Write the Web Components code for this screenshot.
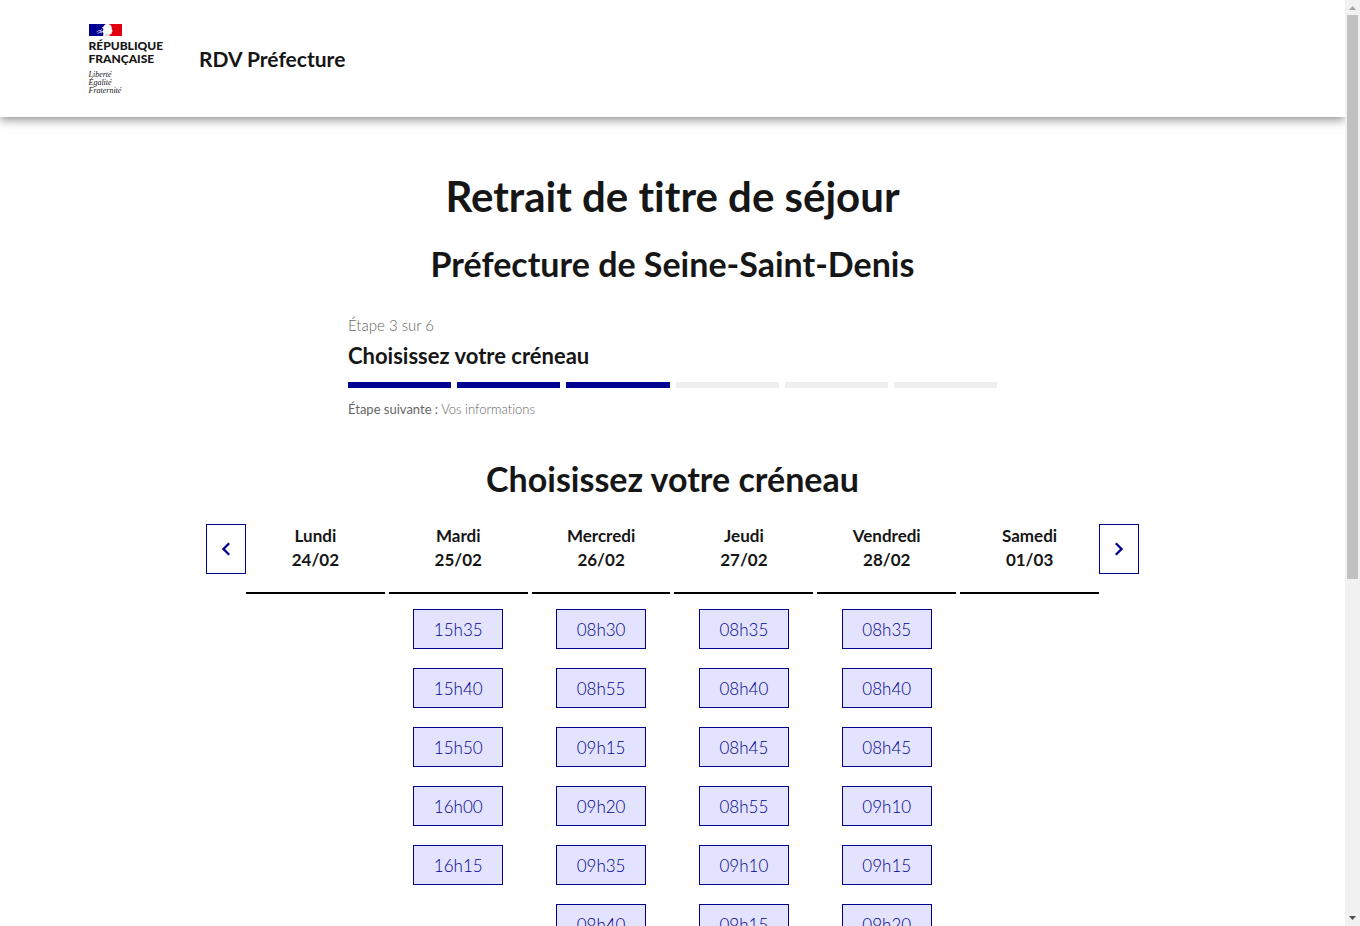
<!DOCTYPE html>
<html lang="fr">
<head>
<meta charset="utf-8">
<meta name="viewport" content="width=device-width, initial-scale=1">
<title>RDV Préfecture</title>
<style>
    :root {
        --blue-france: #000091;
        --slot-background: #e3e3fd;
        --text-title: #161616;
        --text-mention: #666666;
        --grey: #eeeeee;
    }
    body {
        margin: 0;
        background: #ffffff;
        color: var(--text-title);
        font-family: Lato, "Liberation Sans", sans-serif;
        font-variant-ligatures: none;
    }
</style>
</head>
<body>
<rdv-page>
    <rdv-header slot="header" service="RDV Préfecture"></rdv-header>
    <rdv-title>
        Retrait de titre de séjour
        <span slot="place">Préfecture de Seine-Saint-Denis</span>
    </rdv-title>
    <rdv-stepper current="3" total="6" next="Vos informations">Choisissez votre créneau</rdv-stepper>
    <rdv-calendar>Choisissez votre créneau</rdv-calendar>
</rdv-page>

<script>
// 1. Data
const days = [
    { name: 'Lundi', date: '24/02', slots: [] },
    { name: 'Mardi', date: '25/02', slots: ['15h35', '15h40', '15h50', '16h00', '16h15'] },
    { name: 'Mercredi', date: '26/02', slots: ['08h30', '08h55', '09h15', '09h20', '09h35', '09h40'] },
    { name: 'Jeudi', date: '27/02', slots: ['08h35', '08h40', '08h45', '08h55', '09h10', '09h15'] },
    { name: 'Vendredi', date: '28/02', slots: ['08h35', '08h40', '08h45', '09h10', '09h15', '09h20'] },
    { name: 'Samedi', date: '01/03', slots: [] }
];

// 2. Web Components

class RdvPage extends HTMLElement {
    constructor() {
        super();
        this.attachShadow({ mode: 'open' });
        this.shadowRoot.innerHTML = `
            <style>
                :host {
                    display: grid;
                    grid-template-columns: 1fr 15px;
                    height: 100vh;
                }
                .view {
                    overflow-y: auto;
                    scrollbar-width: none;
                }
                main { padding: 55px 24px 24px; }
                .bar {
                    display: flex;
                    flex-direction: column;
                    background: #f1f1f1;
                }
                .bar svg { display: block; width: 15px; height: 15px; flex: none; }
                .track { flex: 1; padding: 0 2px; }
                .thumb { height: 63%; background: #c1c1c1; }
            </style>
            <div class="view">
                <slot name="header"></slot>
                <main><slot></slot></main>
            </div>
            <div class="bar" aria-hidden="true">
                <svg viewBox="0 0 15 15"><path d="M4 10 L7.5 6 L11 10Z" fill="#a3a3a3"/></svg>
                <div class="track"><div class="thumb"></div></div>
                <svg viewBox="0 0 15 15"><path d="M4 5 L7.5 9 L11 5Z" fill="#505050"/></svg>
            </div>
        `;
    }
}
customElements.define('rdv-page', RdvPage);

class RdvLogo extends HTMLElement {
    constructor() {
        super();
        this.attachShadow({ mode: 'open' });
        this.shadowRoot.innerHTML = `
            <style>
                :host { display: block; }
                svg { display: block; width: 33px; height: 12px; }
                p { margin: 0; }
                .name {
                    padding: 3px 0 6px;
                    font-size: 12px;
                    line-height: 13px;
                    font-weight: 900;
                }
                .motto {
                    font-family: "Liberation Serif", serif;
                    font-style: italic;
                    font-size: 8px;
                    line-height: 8px;
                }
            </style>
            <svg viewBox="0 0 33 12" aria-hidden="true">
                <path d="M0 0H17L15.500 1L14.500 2.500L13 3.500L13.500 4.200L14.500 5L14 6.500L13.500 8L14.500 9.500L14 12H0Z" fill="#000091"/>
                <path d="M7.500 8L9.500 6.600L11 6.800L13 5.500M8.500 9.500L10.500 8.500L13 8.800M11 7.600L14 7.200" fill="none" stroke="#c4c4e6" stroke-width="0.900"/>
                <path d="M19.500 0H33V12H20.500L20.500 10.500L22.500 10L22.800 8.200L23.600 7L22.800 5L22.500 2.500L21.500 1Z" fill="#e1000f"/>
                <path d="M16 11L17.500 9.800L19.500 10.300L19.500 12H16Z" fill="#d6d6e0"/>
            </svg>
            <p class="name">RÉPUBLIQUE<br>FRANÇAISE</p>
            <p class="motto">Liberté<br>Égalité<br>Fraternité</p>
        `;
    }
}
customElements.define('rdv-logo', RdvLogo);

class RdvHeader extends HTMLElement {
    constructor() {
        super();
        this.attachShadow({ mode: 'open' });
        this.shadowRoot.innerHTML = `
            <style>
                :host {
                    display: block;
                    background: #ffffff;
                    box-shadow: 0 2px 10px rgba(0, 0, 0, 0.5);
                }
                .container {
                    display: flex;
                    align-items: center;
                    gap: 36px;
                    max-width: 1168px;
                    margin: 0 auto;
                    padding: 24px 16px 22px;
                }
                a {
                    padding-bottom: 2px;
                    color: inherit;
                    text-decoration: none;
                    font-size: 21px;
                    line-height: 28px;
                    font-weight: 700;
                }
            </style>
            <header class="container">
                <rdv-logo></rdv-logo>
                <a href="#"></a>
            </header>
        `;
    }

    connectedCallback() {
        this.shadowRoot.querySelector('a').textContent = this.getAttribute('service');
    }
}
customElements.define('rdv-header', RdvHeader);

class RdvTitle extends HTMLElement {
    constructor() {
        super();
        this.attachShadow({ mode: 'open' });
        this.shadowRoot.innerHTML = `
            <style>
                :host { display: block; text-align: center; }
                h1 { margin: 0 0 24px; font-size: 42px; line-height: 48px; }
                h2 { margin: 0 0 29px; font-size: 34px; line-height: 40px; }
            </style>
            <h1><slot></slot></h1>
            <h2><slot name="place"></slot></h2>
        `;
    }
}
customElements.define('rdv-title', RdvTitle);

class RdvStepper extends HTMLElement {
    constructor() {
        super();
        this.attachShadow({ mode: 'open' });
        this.shadowRoot.innerHTML = `
            <style>
                :host {
                    display: block;
                    max-width: 649px;
                    margin: 0 auto 40px;
                }
                p { margin: 0; color: var(--text-mention); font-weight: 300; }
                .state { font-size: 15px; line-height: 24px; }
                h2 { margin: 5px 0 12px; font-size: 22px; line-height: 28px; }
                .steps { display: flex; gap: 6px; height: 6px; margin-bottom: 11px; }
                .steps span { flex: 1; background: var(--grey); }
                .steps .done { background: var(--blue-france); }
                .next { font-size: 13px; line-height: 20px; }
            </style>
            <p class="state"></p>
            <h2><slot></slot></h2>
            <div class="steps"></div>
            <p class="next"><b>Étape suivante :</b> <span></span></p>
        `;
    }

    connectedCallback() {
        const current = Number(this.getAttribute('current'));
        const total = Number(this.getAttribute('total'));
        const steps = this.shadowRoot.querySelector('.steps');

        this.shadowRoot.querySelector('.state').textContent = `Étape ${current} sur ${total}`;
        this.shadowRoot.querySelector('.next span').textContent = this.getAttribute('next');
        for (let i = 0; i < total; i++) {
            const step = document.createElement('span');
            if (i < current) step.className = 'done';
            steps.appendChild(step);
        }
    }
}
customElements.define('rdv-stepper', RdvStepper);

class RdvDay extends HTMLElement {
    constructor() {
        super();
        this.attachShadow({ mode: 'open' });
        this.shadowRoot.innerHTML = `
            <style>
                :host { display: block; text-align: center; }
                h3 {
                    margin: 0 0 15px;
                    padding-bottom: 20px;
                    border-bottom: 2px solid #000000;
                    font-size: 17px;
                    line-height: 24px;
                }
                .slots {
                    display: flex;
                    flex-direction: column;
                    align-items: center;
                    gap: 19px;
                }
                button {
                    width: 90px;
                    height: 40px;
                    padding: 2px 0 0;
                    border: 1px solid var(--blue-france);
                    background: var(--slot-background);
                    color: var(--blue-france);
                    font-family: inherit;
                    font-size: 17px;
                    font-weight: 300;
                    line-height: 24px;
                    cursor: pointer;
                }
            </style>
            <h3></h3>
            <div class="slots"></div>
        `;
    }

    update(day) {
        this.shadowRoot.querySelector('h3').innerHTML = `${day.name}<br>${day.date}`;
        const list = this.shadowRoot.querySelector('.slots');
        day.slots.forEach(time => {
            const button = document.createElement('button');
            button.type = 'button';
            button.textContent = time;
            list.appendChild(button);
        });
    }
}
customElements.define('rdv-day', RdvDay);

class RdvCalendar extends HTMLElement {
    constructor() {
        super();
        this.attachShadow({ mode: 'open' });
        this.shadowRoot.innerHTML = `
            <style>
                :host { display: block; max-width: 933px; margin: 0 auto; }
                h2 {
                    margin: 0 0 25px;
                    font-size: 34px;
                    line-height: 40px;
                    text-align: center;
                }
                .week { display: flex; align-items: flex-start; }
                .days {
                    flex: 1;
                    display: grid;
                    grid-template-columns: repeat(6, 1fr);
                    gap: 4px;
                }
                button {
                    display: grid;
                    place-items: center;
                    width: 40px;
                    height: 50px;
                    padding: 0;
                    border: 1px solid var(--blue-france);
                    background: transparent;
                    color: var(--blue-france);
                    cursor: pointer;
                }
                svg { width: 24px; height: 24px; fill: currentColor; stroke: currentColor; stroke-width: 0.4; }
            </style>
            <h2><slot></slot></h2>
            <div class="week">
                <button type="button" aria-label="Semaine précédente">
                    <svg viewBox="0 0 24 24"><path d="M10.828 12l4.950 4.950-1.414 1.414L8 12l6.364-6.364 1.414 1.414z"/></svg>
                </button>
                <div class="days"></div>
                <button type="button" aria-label="Semaine suivante">
                    <svg viewBox="0 0 24 24"><path d="M13.172 12L8.222 7.050l1.414-1.414L16 12l-6.364 6.364-1.414-1.414z"/></svg>
                </button>
            </div>
        `;
    }

    connectedCallback() {
        const container = this.shadowRoot.querySelector('.days');
        days.forEach(day => {
            const column = document.createElement('rdv-day');
            column.update(day);
            container.appendChild(column);
        });
    }
}
customElements.define('rdv-calendar', RdvCalendar);
</script>
</body>
</html>
